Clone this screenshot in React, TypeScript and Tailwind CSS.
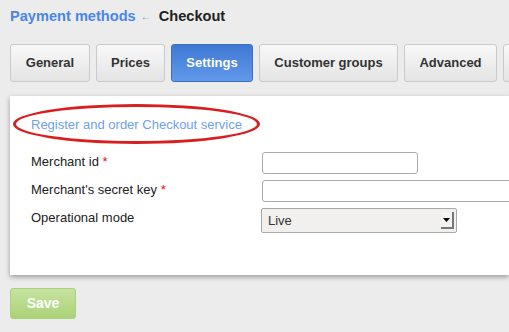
import React from "react";

const tabs = [
    { label: "General", w: "w-[80px]" },
    { label: "Prices", w: "w-[69px]" },
    { label: "Settings", w: "w-[82px]" },
    { label: "Customer groups", w: "w-[139px]" },
    { label: "Advanced", w: "w-[93px]" },
];

function Tab({ label, w, active }: { label: string; w: string; active?: boolean }) {
    return (
        <div
            className={
                (active
                    ? "border-[#3b6fc4] bg-gradient-to-b from-[#3f78d4] to-[#6299ea] text-white "
                    : "border-[#cacaca] bg-gradient-to-b from-[#f8f8f8] to-[#e4e4e4] text-[#333] ") +
                w +
                " h-[38px] flex items-center justify-center rounded-[3px] border font-bold text-[13px] shrink-0"
            }
        >
            {label}
        </div>
    );
}

export default function App() {
    return (
        <div className="w-[509px] h-[332px] overflow-hidden bg-[#ececec] font-['Liberation_Sans',Arial,sans-serif]">
            <div className="flex items-center h-[33px] pl-[10px] text-[14.6px] font-bold">
                <span className="text-[#4a86e8]">Payment methods</span>
                <span className="ml-[5px] mr-[8px] text-[#7a8fae] text-[10px] font-normal">&#8592;</span>
                <span className="text-[#222]">Checkout</span>
            </div>
            <div className="flex gap-[6px] pl-[10px] mt-[11px]">
                {tabs.map((t) => (
                    <Tab key={t.label} label={t.label} w={t.w} active={t.label === "Settings"} />
                ))}
                <div className="h-[38px] w-[20px] rounded-[3px] border border-[#cacaca] bg-gradient-to-b from-[#f8f8f8] to-[#e4e4e4] shrink-0" />
            </div>
            <div className="ml-[10px] mt-[14px] h-[179px] bg-white shadow-[0_2px_5px_rgba(0,0,0,0.35)] relative pt-[20px] pl-[21px]">
                <div className="absolute left-[3px] top-[8px] w-[247px] h-[40px] rounded-[50%] border-[3px] border-[#d81e1e]" />
                <div className="text-[13px] text-[#6e9ff0] h-[18px] leading-[18px]">
                    Register and order Checkout service
                </div>
                <div className="mt-[18px] grid grid-cols-[231px_1fr] gap-y-[6px] text-[13px] text-[#222]">
                    <div>
                        Merchant id <span className="text-[#e01010]">*</span>
                    </div>
                    <div className="w-[156px] h-[22px] border border-[#a9a9a9] rounded-[3px] bg-white" />
                    <div>
                        Merchant's secret key <span className="text-[#e01010]">*</span>
                    </div>
                    <div className="w-[260px] h-[22px] border border-[#a9a9a9] rounded-[3px] bg-white" />
                    <div>Operational mode</div>
                    <div className="-ml-[1px] w-[196px] h-[25px] border border-[#a9a9a9] rounded-[2px] bg-[#f1f0ee] flex items-center justify-between pl-[6px] pr-[2px] text-[13px] text-[#333]">
                        <span>Live</span>
                        <div className="w-[13px] h-[17px] bg-[#f4f4f4] border-r-2 border-b-2 border-[#777] flex items-center justify-center">
                            <svg width="7" height="4" viewBox="0 0 7 4">
                                <path d="M0 0h7L3.5 4z" fill="#000" />
                            </svg>
                        </div>
                    </div>
                </div>
            </div>
            <div className="ml-[10px] mt-[13px] w-[66px] h-[31px] rounded-[3px] border border-[#a9d27a] bg-gradient-to-b from-[#c6e3a0] to-[#abd276] flex items-center justify-center text-white font-bold text-[14px]">
                Save
            </div>
        </div>
    );
}
